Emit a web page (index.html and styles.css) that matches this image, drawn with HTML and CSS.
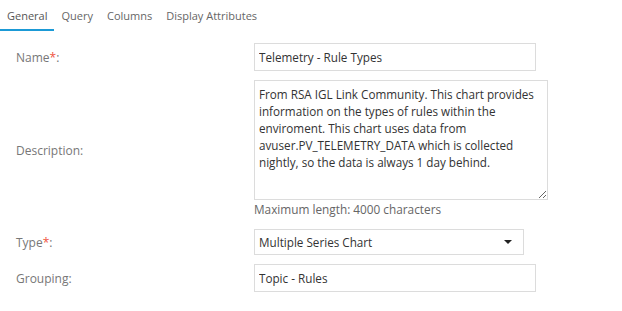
FILE: index.html
```html
<!DOCTYPE html>
<html lang="en">

<head>
    <meta charset="UTF-8">
    <title>Chart Properties</title>
    <link rel="stylesheet" href="styles.css">
</head>

<body>
    <!-- Tabs -->
    <div class="tabs">
        <span class="tab active">General</span>
        <span class="tab">Query</span>
        <span class="tab">Columns</span>
        <span class="tab">Display Attributes</span>
    </div>
    <!-- Form -->
    <div class="form">
        <label class="field-label">Name<span class="req">*</span>:</label>
        <div class="field">
            <input type="text" class="text-input" value="Telemetry - Rule Types">
        </div>

        <label class="field-label">Description:</label>
        <div class="field">
            <textarea class="desc-input">From RSA IGL Link Community. This chart provides information on the types of rules within the enviroment. This chart uses data from avuser.PV_TELEMETRY_DATA which is collected nightly, so the data is always 1 day behind.</textarea>
            <div class="help">Maximum length: 4000 characters</div>
        </div>

        <label class="field-label">Type<span class="req">*</span>:</label>
        <div class="field">
            <div class="select">
                <span>Multiple Series Chart</span>
                <svg class="caret" width="8" height="4" viewBox="0 0 8 4"><path d="M0 0h8L4 4z" fill="#222"/></svg>
            </div>
        </div>

        <label class="field-label">Grouping:</label>
        <div class="field">
            <input type="text" class="text-input" value="Topic - Rules">
        </div>
    </div>
</body>

</html>
```

FILE: styles.css
```css
body {
    margin: 0;
    background-color: #fff;
    font-family: 'Open Sans', sans-serif;
    font-size: 12px;
    color: #333;
}

.tabs {
    display: flex;
    height: 31px;
}

.tab {
    padding: 8px 7px 0;
    color: #666;
    font-size: 11px;
    box-sizing: border-box;
    height: 31px;
}

.tab.active {
    color: #555;
    border-bottom: 2px solid #1b9ad6;
}

.form {
    display: grid;
    grid-template-columns: 238px 1fr;
    row-gap: 9px;
    padding: 12px 0 0 16px;
}

.field-label {
    align-self: center;
    color: #777;
    font-size: 12px;
}

.req {
    color: #f0523e;
}

.field {
    display: flex;
    flex-direction: column;
}

.text-input {
    width: 282px;
    height: 28px;
    box-sizing: border-box;
    margin: 0;
    padding: 0 4px;
    border: 1px solid #dcdcdc;
    font-family: 'Open Sans', sans-serif;
    font-size: 11.7px;
    color: #333;
}

.desc-input {
    width: 294px;
    height: 120px;
    box-sizing: border-box;
    margin: 0;
    padding: 5px 4px;
    border: 1px solid #dcdcdc;
    font-family: 'Open Sans', sans-serif;
    font-size: 11.7px;
    line-height: 17px;
    color: #333;
    resize: vertical;
}

.help {
    color: #666;
    font-size: 11.8px;
    line-height: 18px;
    margin-bottom: 2px;
}

.select {
    display: flex;
    align-items: center;
    justify-content: space-between;
    width: 270px;
    height: 26px;
    box-sizing: border-box;
    padding: 0 11px 0 4px;
    border: 1px solid #dcdcdc;
    font-size: 11.7px;
}
```
